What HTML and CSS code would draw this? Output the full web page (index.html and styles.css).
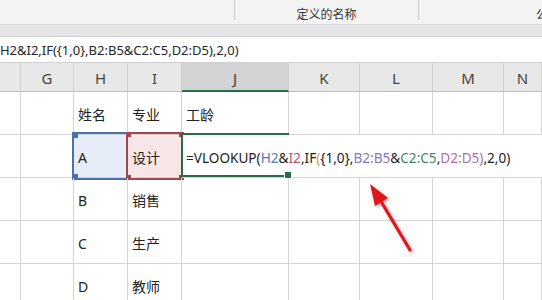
FILE: index.html
```html
<!DOCTYPE html>
<html lang="zh-CN">

<head>
    <meta charset="UTF-8">
    <title>VLOOKUP 多条件查找</title>
    <link rel="stylesheet" href="styles.css">
</head>

<body>
    <!-- Ribbon groups -->
    <div class="ribbon">
        <div class="group first"></div>
        <div class="group names">定义的名称</div>
        <div class="group audit">公</div>
    </div>
    <div class="band"></div>

    <!-- Formula bar -->
    <div class="fbar">
        <span class="ftext">(H2&amp;I2,IF({1,0},B2:B5&amp;C2:C5,D2:D5),2,0)</span>
    </div>

    <!-- Sheet -->
    <div class="sheet">
        <div class="h"></div>
        <div class="h">G</div>
        <div class="h">H</div>
        <div class="h">I</div>
        <div class="h sel">J</div>
        <div class="h">K</div>
        <div class="h">L</div>
        <div class="h">M</div>
        <div class="h">N</div>

        <div class="c"></div>
        <div class="c"></div>
        <div class="c">姓名</div>
        <div class="c">专业</div>
        <div class="c">工龄</div>
        <div class="c"></div>
        <div class="c"></div>
        <div class="c"></div>
        <div class="c"></div>

        <div class="c"></div>
        <div class="c"></div>
        <div class="c ref-blue">A<span class="frame"></span></div>
        <div class="c ref-red">设计<span class="frame"></span></div>
        <div class="c editing">
            <span class="active"></span>
            <span class="k">=VLOOKUP(</span><span class="r1">H2</span><span class="k">&amp;</span><span class="r2">I2</span><span class="k">,IF</span><span class="p1">(</span><span class="k">{1,0},</span><span class="r3">B2:B5</span><span class="k">&amp;</span><span class="r4">C2:C5</span><span class="k">,</span><span class="r5">D2:D5</span><span class="p2">)</span><span class="k">,2,0)</span>
        </div>

        <div class="c"></div>
        <div class="c"></div>
        <div class="c">B</div>
        <div class="c">销售</div>
        <div class="c"></div>
        <div class="c"></div>
        <div class="c"></div>
        <div class="c"></div>
        <div class="c"></div>

        <div class="c"></div>
        <div class="c"></div>
        <div class="c">C</div>
        <div class="c">生产</div>
        <div class="c"></div>
        <div class="c"></div>
        <div class="c"></div>
        <div class="c"></div>
        <div class="c"></div>

        <div class="c"></div>
        <div class="c"></div>
        <div class="c">D</div>
        <div class="c">教师</div>
        <div class="c"></div>
        <div class="c"></div>
        <div class="c"></div>
        <div class="c"></div>
        <div class="c"></div>

        <!-- Annotation arrow -->
        <svg class="arrow" width="60" height="80" viewBox="0 0 60 80">
            <defs>
                <filter id="sh" x="-50%" y="-50%" width="200%" height="200%">
                    <feDropShadow dx="1.5" dy="1.5" stdDeviation="1.5" flood-color="#000" flood-opacity="0.35"/>
                </filter>
            </defs>
            <g filter="url(#sh)">
                <line x1="48" y1="74" x2="17" y2="22" stroke="#e0191b" stroke-width="3.2" stroke-linecap="round"/>
                <polygon points="8,8 26,22 13,30" fill="#e0191b"/>
            </g>
        </svg>
    </div>
</body>

</html>
```

FILE: styles.css
```css
/* General styling */
body {
    margin: 0;
    width: 542px;
    height: 300px;
    overflow: hidden;
    background: #fff;
    font-family: 'Noto Sans', 'Noto Sans CJK SC', sans-serif;
    color: #222;
}

/* Ribbon */
.ribbon {
    height: 24px;
    background-color: #f3f3f3;
    border-bottom: 1px solid #dadada;
    display: flex;
}

.ribbon .group {
    height: 20px;
    font-family: 'Noto Sans CJK SC', sans-serif;
    font-size: 12px;
    line-height: 28px;
    color: #333;
    border-right: 1px solid #c9c9c9;
    box-sizing: border-box;
    text-align: center;
}

.ribbon .first {
    width: 235px;
}

.ribbon .names {
    width: 184px;
}

.ribbon .audit {
    flex: 1;
    border-right: none;
    text-align: right;
    margin-right: -6px;
}

.band {
    height: 11px;
    background-color: #e6e6e6;
    border-bottom: 1px solid #d2d2d2;
}

/* Formula bar */
.fbar {
    height: 25px;
    background: #fff;
    border-bottom: 1px solid #d0d0d0;
    overflow: hidden;
    white-space: nowrap;
}

.ftext {
    display: inline-block;
    margin-left: -4px;
    font-size: 13px;
    line-height: 26px;
    color: #262626;
}

/* Sheet grid */
.sheet {
    position: relative;
    display: grid;
    grid-template-columns: 21px 53px 54px 54px 107px 71px 73px 71px 38px;
    grid-template-rows: 29px repeat(5, 43px);
}

.h {
    background-color: #e8e8e8;
    border-right: 1px solid #cfcfcf;
    border-bottom: 1px solid #bdbdbd;
    box-sizing: border-box;
    font-size: 15px;
    color: #444;
    text-align: center;
    line-height: 30px;
}

.h.sel {
    background-color: #d3d3d3;
    border-bottom: 2px solid #217346;
}

.c {
    position: relative;
    border-right: 1px solid #d4d4d4;
    border-bottom: 1px solid #d4d4d4;
    box-sizing: border-box;
    font-family: 'Noto Sans', 'Noto Sans CJK SC', sans-serif;
    font-size: 14px;
    color: #222;
    padding: 2px 0 0 4px;
    display: flex;
    align-items: center;
    white-space: nowrap;
}

/* Referenced ranges */
.frame {
    position: absolute;
    left: -2px;
    top: -3px;
    right: -3px;
    bottom: -3px;
    pointer-events: none;
}

.ref-blue {
    background-color: #e6edf8;
}

.ref-blue .frame {
    border: 2px solid #4a72ad;
    box-sizing: border-box;
    right: -1px;
    background:
        linear-gradient(#4a72ad, #4a72ad) -2px -2px / 6px 6px no-repeat,
        linear-gradient(#4a72ad, #4a72ad) -2px calc(100% + 2px) / 6px 6px no-repeat;
}

.ref-red {
    background-color: #f8e6e7;
}

.ref-red .frame {
    border: 2px solid #a4464f;
    box-sizing: border-box;
    background:
        linear-gradient(#a4464f, #a4464f) -3px -3px / 6px 6px no-repeat,
        linear-gradient(#a4464f, #a4464f) calc(100% + 3px) -3px / 6px 6px no-repeat,
        linear-gradient(#a4464f, #a4464f) -3px calc(100% + 3px) / 6px 6px no-repeat,
        linear-gradient(#a4464f, #a4464f) calc(100% + 3px) calc(100% + 3px) / 6px 6px no-repeat;
}

/* Cell in edit mode, text spills over K:N */
.editing {
    grid-column: 5 / span 5;
    background: #fff;
    border-right: none;
    padding-left: 4px;
    font-size: 13.6px;
    z-index: 1;
}

.active {
    position: absolute;
    left: -1px;
    top: -2px;
    width: 108px;
    height: 44px;
    border-top: 2px solid #2a6b47;
    border-bottom: 2px solid #2a6b47;
    border-left: 2px solid #2a6b47;
    box-sizing: border-box;
}

.active::after {
    content: '';
    position: absolute;
    right: -3px;
    bottom: -4px;
    width: 6px;
    height: 6px;
    background: #2a6b47;
    border: 1px solid #fff;
}

.k { color: #222; }
.r1 { color: #4f7ab8; }
.r2 { color: #b25a5e; }
.r3 { color: #8678bd; }
.r4 { color: #3f8a63; }
.r5 { color: #a873a4; }
.p1 { color: #c99a5c; }
.p2 { color: #a873a4; }

/* Annotation */
.arrow {
    position: absolute;
    left: 362px;
    top: 113px;
    z-index: 2;
}
```
